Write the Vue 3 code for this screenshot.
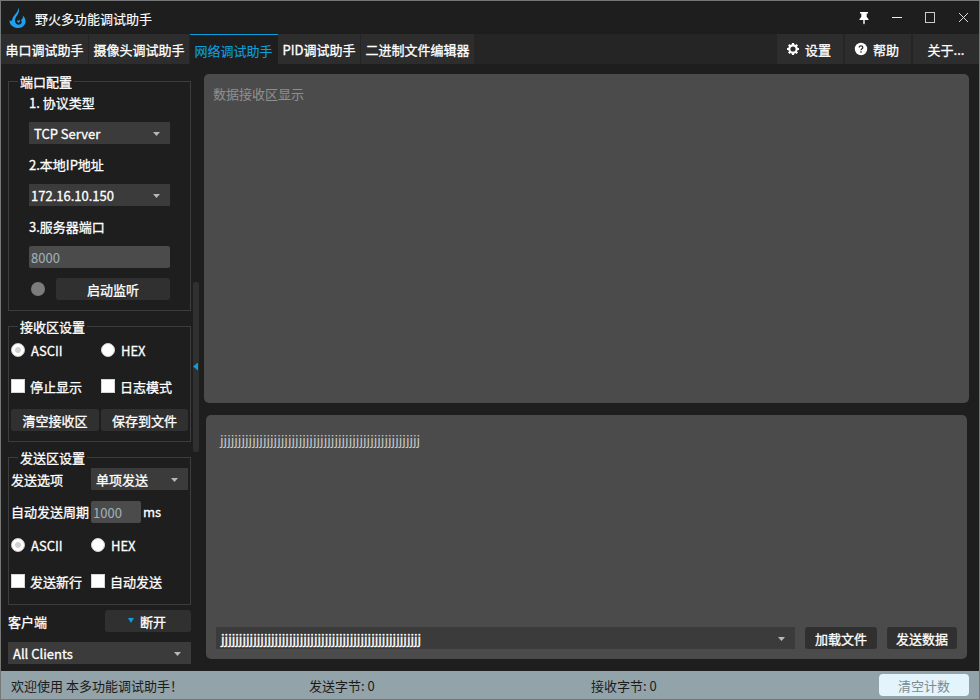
<script setup>
import { ref } from 'vue'

const tabs = [
  { name: '串口调试助手', w: 88 },
  { name: '摄像头调试助手', w: 101 },
  { name: '网络调试助手', w: 88 },
  { name: 'PID调试助手', w: 83 },
  { name: '二进制文件编辑器', w: 114 },
]
const active = ref(2)
const message = 'j'.repeat(56)
</script>

<template>
  <div class="window">
    <header class="titlebar">
      <svg class="logo" width="18" height="22" viewBox="0 0 18 22">
        <path d="M9.2 0.5C10.5 3 10.3 5.200 8.500 7.700C6.500 10.500 5.500 12.500 6.200 15C6.800 17.200 9.200 18.300 11.200 17.300C13 16.400 13.200 14.200 11.800 12.900C13.600 12.600 14.200 10.500 13.800 8.500C16.500 11 17.600 14.600 15.700 17.600C13.600 21 9.500 21.800 6 20.500C2.500 19.200 0.300 16.500 0.500 13.200C1.500 14.200 2.500 14.200 3 13.200C3.600 11.400 3.900 10 5.800 7.800C7.900 5.400 9.500 3.500 9.200 0.500Z" fill="#1e9ff0" />
        <path d="M8 13.500C8 15.500 9.500 16.200 10.500 15.200C11.200 14.500 10.800 13.300 10.300 12.500C9.800 13.600 8.900 14 8 13.500Z" fill="#1e9ff0" />
      </svg>
      <span class="title">野火多功能调试助手</span>
      <svg class="controls" width="120" height="33" viewBox="0 0 120 33">
        <path d="M9 11H17V12.500H15.700V16L17.500 18V19H13.700V22.500L13 23.500L12.300 22.500V19H8.500V18L10.300 16V12.500H9Z" fill="#fff" />
        <path d="M41 16.500H51" stroke="#eee" />
        <rect x="74.500" y="11.500" width="9" height="10" fill="none" stroke="#ccc" />
        <path d="M108 12L117 21M117 12L108 21" stroke="#ddd" />
      </svg>
    </header>

    <nav class="tabs">
      <div
        v-for="(t, i) in tabs"
        :key="t.name"
        class="tab"
        :class="{ active: i === active }"
        :style="{ width: t.w + 'px' }"
        @click="active = i"
      >{{ t.name }}</div>
      <div class="tools">
        <div class="tool">
          <svg width="14" height="14" viewBox="0 0 14 14">
            <circle cx="7" cy="7" r="3.700" fill="none" stroke="#fff" stroke-width="2.200" />
            <path d="M7 1V3M7 11V13M1 7H3M11 7H13M2.800 2.800L4 4M10 10L11.200 11.200M11.200 2.800L10 4M4 10L2.800 11.200" stroke="#fff" stroke-width="2.200" />
          </svg>
          <span>设置</span>
        </div>
        <div class="tool">
          <svg width="14" height="14" viewBox="0 0 14 14">
            <circle cx="7" cy="7" r="6.200" fill="#fff" />
            <path d="M5.200 5.500C5.200 3.300 8.800 3.300 8.800 5.500C8.800 6.800 7 6.700 7 8.300M7 9.200V10.700" fill="none" stroke="#2d2d2d" stroke-width="1.300" />
          </svg>
          <span>帮助</span>
        </div>
        <div class="tool about">关于...</div>
      </div>
    </nav>

    <main class="body">
      <aside class="side">
        <section class="group port">
          <div class="legend">端口配置</div>
          <div class="form">
            <label>1. 协议类型</label>
            <div class="combo pad">TCP Server<i class="caret"></i></div>
            <label>2.本地IP地址</label>
            <div class="combo">172.16.10.150<i class="caret"></i></div>
            <label>3.服务器端口</label>
            <div class="input">8000</div>
            <div class="listen">
              <i class="lamp"></i>
              <div class="btn grow">启动监听</div>
            </div>
          </div>
        </section>

        <section class="group recv">
          <div class="legend">接收区设置</div>
          <div class="opts">
            <div class="opt"><i class="radio on"></i>ASCII</div>
            <div class="opt"><i class="radio"></i>HEX</div>
          </div>
          <div class="opts checks">
            <div class="opt"><i class="check"></i>停止显示</div>
            <div class="opt"><i class="check"></i>日志模式</div>
          </div>
          <div class="pair">
            <div class="btn">清空接收区</div>
            <div class="btn">保存到文件</div>
          </div>
        </section>

        <section class="group send">
          <div class="legend">发送区设置</div>
          <div class="line first">
            <span class="cap">发送选项</span>
            <div class="combo pad mode">单项发送<i class="caret"></i></div>
          </div>
          <div class="line">
            <span class="cap">自动发送周期</span>
            <div class="input period">1000</div>
            <span class="unit">ms</span>
          </div>
          <div class="opts narrow">
            <div class="opt"><i class="radio on"></i>ASCII</div>
            <div class="opt"><i class="radio"></i>HEX</div>
          </div>
          <div class="opts narrow checks">
            <div class="opt"><i class="check"></i>发送新行</div>
            <div class="opt"><i class="check"></i>自动发送</div>
          </div>
        </section>

        <div class="client">
          <span>客户端</span>
          <div class="btn cut"><i class="drop"></i>断开</div>
        </div>
        <div class="combo pad all">All Clients<i class="caret"></i></div>
      </aside>

      <div class="splitter"><i></i></div>

      <div class="content">
        <div class="receive">数据接收区显示</div>
        <div class="transmit">
          <div class="message">{{ message }}</div>
          <div class="actions">
            <div class="combo pad history">{{ message }}<i class="caret"></i></div>
            <div class="btn load">加载文件</div>
            <div class="btn go">发送数据</div>
          </div>
        </div>
      </div>
    </main>

    <footer class="status">
      <span class="welcome">欢迎使用 本多功能调试助手！</span>
      <span class="sent">发送字节: 0</span>
      <span class="got">接收字节: 0</span>
      <div class="clear">清空计数</div>
    </footer>
  </div>
</template>

<style>
body {
  margin: 0;
  background: #1e1e1e;
}
</style>

<style scoped>
.window {
  box-sizing: border-box;
  width: 980px;
  height: 700px;
  border: 1px solid #747776;
  background: #1e1e1e;
  color: #fff;
  font: 400 13px/20px "Noto Sans CJK SC", sans-serif;
  -webkit-text-stroke: 0.3px;
  display: flex;
  flex-direction: column;
  overflow: hidden;
  white-space: nowrap;
}
.window * { box-sizing: border-box; }
i { display: block; flex: none; }

.titlebar { height: 33px; display: flex; align-items: center; padding-left: 8px; }
.logo { margin-top: 1px; }
.title { margin: 2px 0 0 8px; -webkit-text-stroke: 0.15px; }
.controls { margin: 0 8px 0 auto; }

.tabs { height: 30px; display: flex; background: #252525; flex: none; }
.tab {
  flex: none;
  background: #2d2d2d;
  border-right: 1px solid #252525;
  text-align: center;
  line-height: 32px;
}
.tab.active {
  background: #1e1e1e;
  border-top: 1px solid #0d9ddb;
  border-right: 0;
  padding-right: 1px;
  color: #0d9ddb;
  -webkit-text-stroke: 0.15px;
}
.tools { margin-left: auto; display: flex; gap: 2px; }
.tool {
  width: 66px;
  background: #2d2d2d;
  display: flex;
  align-items: center;
  justify-content: center;
  gap: 5px;
  padding: 2px 3px 0 0;
}
.tool.about { padding-right: 0; }
.tool svg { margin-top: -2px; }

.body { height: 607px; display: flex; flex: none; }
.side { width: 190px; padding-left: 7px; padding-top: 17px; }
.group { width: 183px; border: 1px solid #3d3d3d; padding-left: 2px; }
.port { height: 230px; }
.recv { height: 116px; margin-top: 15px; }
.send { height: 148px; margin-top: 15px; }
.legend {
  width: max-content;
  height: 20px;
  margin: -10px 0 0 7px;
  padding: 0 2px;
  background: #1e1e1e;
}
.form { width: 141px; margin-left: 18px; display: flex; flex-direction: column; }
.form label { height: 22px; line-height: 22px; margin-bottom: 8px; }
.form .combo, .form .input { margin-bottom: 10px; }
.combo {
  height: 22px;
  line-height: 23px;
  padding: 0 10px 0 2px;
  background: #3b3b3b;
  display: flex;
  align-items: center;
  justify-content: space-between;
  flex: none;
}
.combo.pad { padding-left: 5px; }
.caret {
  width: 7px;
  height: 4px;
  margin-top: 2px;
  background: #b8b8b8;
  clip-path: polygon(0 0, 100% 0, 50% 100%);
}
.input {
  height: 22px;
  line-height: 24px;
  padding-left: 2px;
  border-radius: 2px;
  background: #4b4b4b;
  color: #9fb0b7;
  -webkit-text-stroke: 0.1px;
}
.btn {
  height: 22px;
  line-height: 24px;
  border-radius: 3px;
  background: #303030;
  text-align: center;
}
.listen { display: flex; align-items: center; gap: 11px; padding-left: 2px; }
.lamp { width: 14px; height: 14px; border-radius: 50%; background: #7c7c7c; }
.grow { flex: 1; }

.opts { display: grid; grid-template-columns: 90px 90px; height: 20px; margin-top: 4px; }
.opts.checks { margin-top: 16px; }
.opts.narrow { grid-template-columns: 80px 90px; margin-top: 13px; }
.opts.narrow.checks { margin-top: 16px; }
.opt { display: flex; gap: 6px; line-height: 20px; }
.checks .opt { gap: 5px; }
.radio {
  width: 14px;
  height: 14px;
  margin-top: 2px;
  border: 1px solid #d5d5d5;
  border-radius: 50%;
  background: #fff;
}
.radio.on { background: radial-gradient(circle, #d2d2d2 0 2.500px, #fff 3.500px); }
.check { width: 14px; height: 14px; margin-top: 2px; border: 1px solid #d5d5d5; background: #fff; }
.pair { display: flex; gap: 2px; margin-top: 12px; }
.pair .btn { width: 88px; }
.pair .btn + .btn { width: 87px; }

.line { display: flex; height: 22px; margin-top: 11px; line-height: 22px; }
.line.first { margin-top: 0; line-height: 23px; }
.cap { width: 80px; }
.mode { width: 97px; }
.period { width: 50px; }
.unit { margin-left: 2px; }
.client {
  display: flex;
  justify-content: space-between;
  width: 183px;
  height: 22px;
  margin-top: 5px;
  line-height: 24px;
}
.cut { width: 86px; display: flex; justify-content: center; gap: 6px; padding-right: 2px; }
.drop {
  width: 6px;
  height: 5px;
  margin-top: 8px;
  background: #0d9ddb;
  clip-path: polygon(0 0, 100% 0, 50% 100%);
}
.all { width: 183px; margin-top: 10px; }

.splitter {
  width: 6px;
  height: 170px;
  margin: 218px 0 0 2px;
  border-radius: 2px;
  background: #303030;
  display: flex;
  align-items: center;
  justify-content: flex-end;
}
.splitter i {
  width: 5px;
  height: 8px;
  margin: -1px 1px 0 0;
  background: #0d9ddb;
  clip-path: polygon(100% 0, 100% 100%, 0 50%);
}

.content { padding: 10px 0 0 5px; }
.receive {
  width: 765px;
  height: 329px;
  border-radius: 5px;
  background: #4b4b4b;
  padding: 10px 9px;
  color: #8e8e8e;
  -webkit-text-stroke: 0.1px;
}
.transmit {
  width: 761px;
  height: 244px;
  margin: 12px 0 0 2px;
  border-radius: 5px;
  background: #4b4b4b;
  display: flex;
  flex-direction: column;
  justify-content: space-between;
  padding: 15px 10px 10px;
}
.message { padding-left: 4px; color: #c8c8c8; -webkit-text-stroke: 0; }
.actions { display: flex; gap: 10px; }
.history { width: 579px; }
.load { width: 72px; }
.go { width: 70px; }

.status {
  height: 28px;
  flex: none;
  background: #93a3aa;
  color: #1b1b1b;
  -webkit-text-stroke: 0;
  line-height: 30px;
  display: flex;
  padding: 0 10px;
}
.welcome { width: 298px; }
.sent { width: 282px; }
.clear {
  width: 90px;
  height: 22px;
  margin: 3px 0 0 auto;
  border-radius: 4px;
  background: #e3f4fc;
  color: #7b8a91;
  line-height: 24px;
  text-align: center;
}
</style>
